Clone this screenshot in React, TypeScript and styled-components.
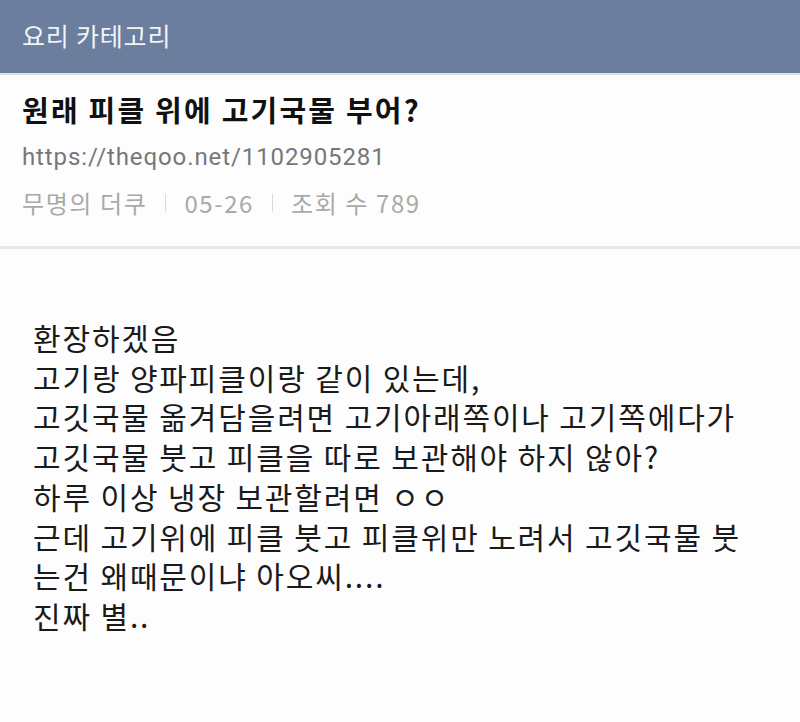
import React, { FC } from 'react';
import styled, { createGlobalStyle } from 'styled-components';

const GlobalStyle = createGlobalStyle`
  html, body {
    margin: 0;
    padding: 0;
    background: #fdfdfd;
  }
  body {
    font-family: "Noto Sans CJK KR", "Noto Sans", sans-serif;
  }
`;

const lines: string[] = [
  '환장하겠음',
  '고기랑 양파피클이랑 같이 있는데,',
  '고깃국물 옮겨담을려면 고기아래쪽이나 고기쪽에다가',
  '고깃국물 붓고 피클을 따로 보관해야 하지 않아?',
  '하루 이상 냉장 보관할려면 ㅇㅇ',
  '근데 고기위에 피클 붓고 피클위만 노려서 고깃국물 붓',
  '는건 왜때문이냐 아오씨....',
  '진짜 별..',
];

const App: FC = () => (
  <Page>
    <GlobalStyle />
    <TopBar>
      <Category>요리 카테고리</Category>
    </TopBar>
    <Head>
      <Title>원래 피클 위에 고기국물 부어?</Title>
      <Url>https://theqoo.net/1102905281</Url>
      <Meta>
        <span>무명의 더쿠</span>
        <Sep />
        <span>05-26</span>
        <Sep />
        <span>조회 수 789</span>
      </Meta>
    </Head>
    <Body>
      {lines.map((line, i) => (
        <Line key={i}>{line}</Line>
      ))}
    </Body>
  </Page>
);

const Page = styled.div`
  width: 800px;
  height: 722px;
  overflow: hidden;
  background: #fdfdfd;
`;

const TopBar = styled.header`
  height: 75px;
  background: #6b7e9d;
  border-bottom: 2px solid #dbe3ea;
  display: flex;
  align-items: center;
  padding: 0 22px;
  box-sizing: border-box;
`;

const Category = styled.h2`
  margin: 0 0 4px;
  font-size: 25px;
  font-weight: 400;
  color: #f2f4f7;
  letter-spacing: 0.8px;
`;

const Head = styled.section`
  padding: 15px 22px 0;
  height: 174px;
  box-sizing: border-box;
  border-bottom: 3px solid #e6e6e6;
`;

const Title = styled.h1`
  margin: 0;
  font-size: 29px;
  line-height: 38px;
  font-weight: 700;
  color: #111;
  letter-spacing: 2.2px;
`;

const Url = styled.div`
  margin-top: 13px;
  font-family: Roboto, "Noto Sans", sans-serif;
  font-size: 24px;
  line-height: 32px;
  color: #777;
  letter-spacing: 0.9px;
`;

const Meta = styled.div`
  margin-top: 14px;
  display: flex;
  align-items: center;
  gap: 18px;
  font-size: 24px;
  line-height: 32px;
  color: #a9a9a9;
  letter-spacing: 1.6px;
`;

const Sep = styled.i`
  width: 1px;
  height: 18px;
  background: #dadada;
`;

const Body = styled.article`
  padding: 69px 33px 0;
`;

const Line = styled.p`
  margin: 0;
  font-size: 30px;
  line-height: 39.7px;
  color: #1a1a1a;
  letter-spacing: 1.85px;
  white-space: nowrap;
`;

export default App;
